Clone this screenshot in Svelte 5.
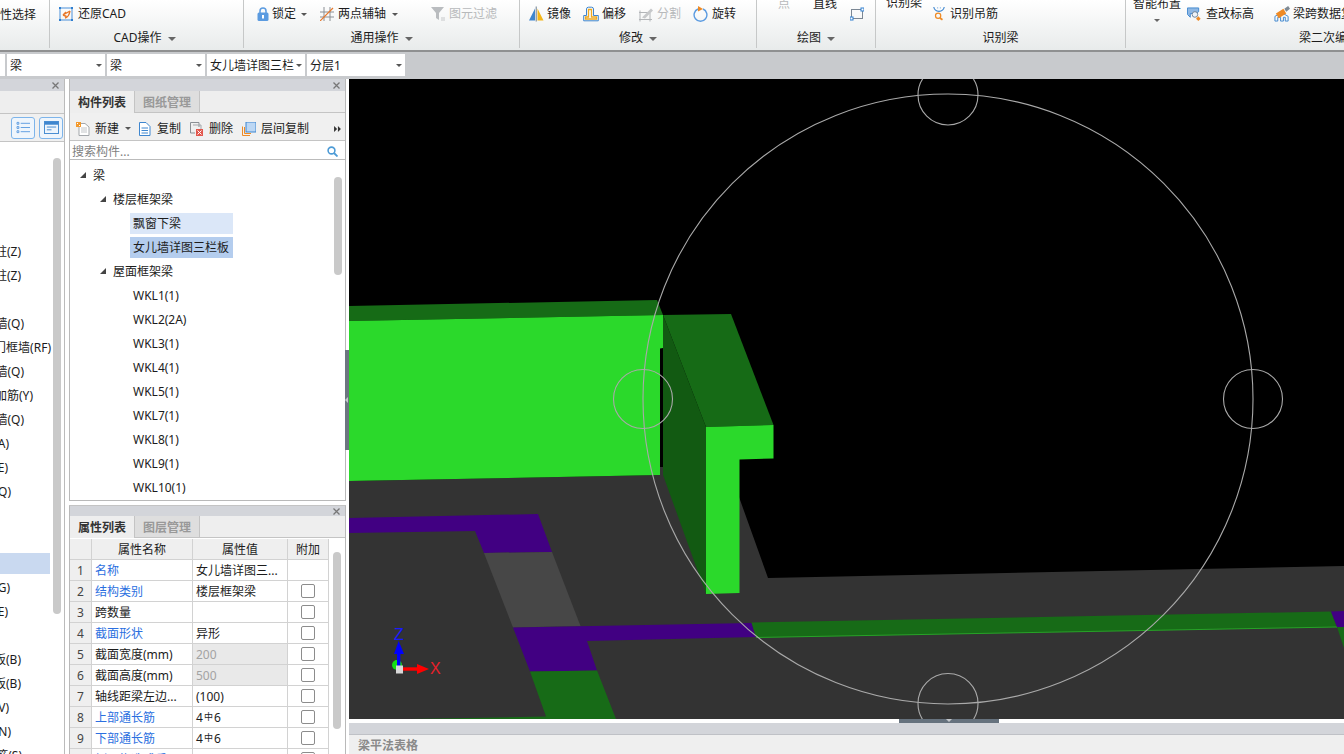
<script lang="ts">
  const leftRows = [
    { end: 0, text: '' }, { end: 0, text: '' }, { end: 0, text: '' }, { end: 0, text: '' },
    { end: 21, text: '框柱(Z)' }, { end: 21, text: '暗柱(Z)' }, { end: 0, text: '' },
    { end: 24, text: '砌体墙(Q)' }, { end: 51, text: '门框墙(RF)' }, { end: 24, text: '砌体墙(Q)' },
    { end: 33, text: '砌体加筋(Y)' }, { end: 24, text: '保温墙(Q)' }, { end: 9, text: '门联窗(A)' },
    { end: 8, text: '飘窗(E)' }, { end: 11, text: '墙洞(Q)' }, { end: 0, text: '' }, { end: 0, text: '' },
    { end: 50, text: '', selected: true },
    { end: 10, text: '连梁(G)' }, { end: 8, text: '圈梁(E)' }, { end: 0, text: '' },
    { end: 21, text: '现浇板(B)' }, { end: 21, text: '螺旋板(B)' }, { end: 9, text: '柱帽(V)' },
    { end: 11, text: '板洞(N)' }, { end: 22, text: '板受力筋(S)' },
  ]

  const tree = [
    { text: '梁', level: 0, open: true },
    { text: '楼层框架梁', level: 1, open: true },
    { text: '飘窗下梁', level: 2, mark: 'hover' },
    { text: '女儿墙详图三栏板', level: 2, mark: 'active' },
    { text: '屋面框架梁', level: 1, open: true },
    ...['WKL1(1)', 'WKL2(2A)', 'WKL3(1)', 'WKL4(1)', 'WKL5(1)', 'WKL7(1)', 'WKL8(1)', 'WKL9(1)', 'WKL10(1)'].map((text) => ({ text, level: 2 })),
  ]

  const props = [
    { name: '名称', value: '女儿墙详图三...', link: true, nobox: true },
    { name: '结构类别', value: '楼层框架梁', link: true },
    { name: '跨数量', value: '' },
    { name: '截面形状', value: '异形', link: true },
    { name: '截面宽度(mm)', value: '200', locked: true },
    { name: '截面高度(mm)', value: '500', locked: true },
    { name: '轴线距梁左边...', value: '(100)' },
    { name: '上部通长筋', value: '4', rebar: '6', link: true },
    { name: '下部通长筋', value: '4', rebar: '6', link: true },
    { name: '侧面构造或受...', value: '', link: true },
  ]
</script>

<div class="app">
  <header class="ribbon">
    <section class="group g1">
      <div class="items"><span class="tool cut">属性选择</span></div>
    </section>

    <section class="group g2">
      <div class="items">
        <span class="tool">
          <svg class="ico" viewBox="0 0 14 14"><rect x="1" y="1" width="12" height="12" fill="none" stroke="#4a90d9" /><rect x="0" y="0" width="2" height="2" fill="#2f7fd0" /><rect x="12" y="0" width="2" height="2" fill="#2f7fd0" /><rect x="0" y="12" width="2" height="2" fill="#2f7fd0" /><rect x="12" y="12" width="2" height="2" fill="#2f7fd0" /><path d="M4 8 L11 4 M4 8 L7 5 M4 8 L7.5 9.5 M6 11 Q10 10 11 4" fill="none" stroke="#e8782a" stroke-width="1.4" /></svg>
          还原CAD
        </span>
      </div>
      <div class="label">CAD操作<i class="caret big"></i></div>
    </section>

    <section class="group g3">
      <div class="items">
        <span class="tool lock-tool">
          <svg class="ico lock" viewBox="0 0 12 14"><path d="M3 6V4a3 3 0 0 1 6 0v2" fill="none" stroke="#5b9be0" stroke-width="1.5" /><rect x="0.5" y="5.5" width="11" height="8.5" rx="1.5" fill="#5b9be0" /><rect x="5" y="8" width="2" height="3.5" fill="#fff" /></svg>
          锁定<i class="caret"></i>
        </span>
        <span class="tool">
          <svg class="ico" viewBox="0 0 14 14"><path d="M0 5H14M0 10H14M4 0V14M10 0V14" stroke="#8a8f94" fill="none" /><path d="M0 14L13 1" stroke="#e8782a" stroke-width="1.2" /></svg>
          两点辅轴<i class="caret"></i>
        </span>
        <span class="tool off">
          <svg class="ico" viewBox="0 0 14 14"><path d="M0 0H13L8 6V13L5 11V6Z" fill="#b9bcbf" /><path d="M10 11h4M10 13h4" stroke="#c6c8ca" /></svg>
          图元过滤
        </span>
      </div>
      <div class="label">通用操作<i class="caret big"></i></div>
    </section>

    <section class="group g4">
      <div class="items">
        <span class="tool">
          <svg class="ico wide" viewBox="0 0 16 15"><path d="M7 2L1 14H7Z" fill="#3e86cf" /><path d="M9.5 2L15.5 14H9.5Z" fill="#f4b619" /><path d="M8.2 0V15" stroke="#6a7b8c" /></svg>
          镜像
        </span>
        <span class="tool">
          <svg class="ico wide" viewBox="0 0 16 15"><path d="M0.7 14.3V9H3.5V2.5Q3.5 0.7 5.5 0.7H8.5Q10.5 0.7 10.5 2.5V9H15.3V14.3Z" fill="none" stroke="#3e86cf" /><path d="M2.5 12.5V10.5H5.5V3H8.5V10.5H13.5V12.5Z" fill="none" stroke="#efa91f" stroke-width="1.3" /></svg>
          偏移
        </span>
        <span class="tool off">
          <svg class="ico wide" viewBox="0 0 16 15"><path d="M1 6H12M1 13H14M2 4V15M12 6V15" fill="none" stroke="#b2b5b8" /><path d="M4 11L13 2L15 4L7 12Z" fill="#c6c8ca" /></svg>
          分割
        </span>
        <span class="tool">
          <svg class="ico wide" viewBox="0 0 16 16"><path d="M10 3A6.4 6.4 0 1 1 5 3" fill="none" stroke="#5b9be0" stroke-width="1.4" /><path d="M5 0L10 3L5 5.5Z" fill="#ee8a25" /></svg>
          旋转
        </span>
      </div>
      <div class="label">修改<i class="caret big"></i></div>
    </section>

    <section class="group g5">
      <div class="items">
        <span class="tool up off">点</span>
        <span class="tool up">直线</span>
        <span class="tool">
          <svg class="ico" viewBox="0 0 14 12"><rect x="1.5" y="1.5" width="11" height="9" fill="none" stroke="#7b8794" /><rect x="0" y="9" width="3" height="3" fill="#fff" stroke="#2f7fd0" /><rect x="11" y="0" width="3" height="3" fill="#fff" stroke="#2f7fd0" /></svg>
        </span>
      </div>
      <div class="label">绘图<i class="caret big"></i></div>
    </section>

    <section class="group g6">
      <div class="items">
        <span class="tool up">识别梁</span>
        <span class="tool">
          <svg class="ico" viewBox="0 0 14 16"><path d="M1 0Q2 5 7 5T13 0" fill="none" stroke="#3e86cf" stroke-width="1.3" /><path d="M5 1h1M8 1h1" stroke="#3e86cf" /><circle cx="6" cy="10" r="3" fill="none" stroke="#ee8a25" stroke-width="1.4" /><path d="M8 12.5l3 2" stroke="#ee8a25" stroke-width="2" /></svg>
          识别吊筋
        </span>
      </div>
      <div class="label low">识别梁</div>
    </section>

    <section class="group g7">
      <div class="items">
        <span class="tool up stack">智能布置<i class="caret"></i></span>
        <span class="tool">
          <svg class="ico" viewBox="0 0 14 15"><path d="M0 1H12V5L9 7H3V11L0 8Z" fill="#8fb8e4" stroke="#3e86cf" /><circle cx="8" cy="8" r="3" fill="#eef3f8" stroke="#6f8193" /><rect x="10" y="11" width="3.5" height="3.5" fill="#ee8a25" transform="rotate(45 12 12.5)" /></svg>
          查改标高
        </span>
        <span class="tool far">
          <svg class="ico wide" viewBox="0 0 17 17"><path d="M1 16V11L8 7L15 11V16H12V12H10V16H7V12H4V16Z" fill="none" stroke="#3e86cf" /><path d="M2 8L10 3L13 8L5 13Z" fill="#ee8a25" /><path d="M11 3L15 0L17 3L13 6Z" fill="#7f8a94" /></svg>
          梁跨数据复制
        </span>
      </div>
      <div class="label">梁二次编辑</div>
    </section>
  </header>

  <div class="filterbar">
    <span class="stub"></span>
    <span class="combo">梁<i class="caret"></i></span>
    <span class="combo">梁<i class="caret"></i></span>
    <span class="combo">女儿墙详图三栏<i class="caret"></i></span>
    <span class="combo">分层1<i class="caret"></i></span>
  </div>

  <main class="workspace">
    <aside class="left-dock">
      <div class="dock-head">
        <svg class="close" viewBox="0 0 7 7"><path d="M0.5 0.5L6.5 6.5M6.5 0.5L0.5 6.5" /></svg>
      </div>
      <div class="left-tabs"></div>
      <div class="left-tools">
        <span class="view-btn">
          <svg viewBox="0 0 16 14"><path d="M5 2.5H15M5 7H15M5 11.5H15" stroke="#5b9be0" /><path d="M1 1.5h2v2H1zM1 6h2v2H1zM1 10.5h2v2H1z" fill="none" stroke="#5b9be0" /></svg>
        </span>
        <span class="view-btn">
          <svg viewBox="0 0 16 14"><rect x="0.5" y="0.5" width="15" height="13" fill="none" stroke="#3e86cf" /><rect x="1" y="1" width="14" height="3" fill="#3e86cf" /><path d="M3 6.5H13M3 9.5H8" stroke="#3e86cf" /></svg>
        </span>
      </div>
      <div class="left-tree">
        {#each leftRows as row}
          <div class="left-row">
            <span class:picked={row.selected} style="width: {row.end}px">{row.text}</span>
          </div>
        {/each}
        <div class="scroll left-scroll"></div>
      </div>
    </aside>

    <div class="mid-dock">
      <section class="panel upper">
        <div class="dock-head">
          <svg class="close" viewBox="0 0 7 7"><path d="M0.5 0.5L6.5 6.5M6.5 0.5L0.5 6.5" /></svg>
        </div>
        <div class="tabs">
          <span class="tab on">构件列表</span>
          <span class="tab">图纸管理</span>
        </div>
        <div class="actions">
          <span class="act new">
            <svg viewBox="0 0 14 14"><path d="M3 1.5H9L13 5V13.5H3Z" fill="#fff" stroke="#a3a7ab" /><path d="M5 6h6M5 8h6M5 10h6" stroke="#c2c5c8" /><rect x="0" y="0" width="5" height="5" fill="#f39a2e" /><path d="M1 1h1v1H1zM3 3h1v1H3z" fill="#fff" /></svg>
            新建<i class="caret"></i>
          </span>
          <span class="act">
            <svg viewBox="0 0 14 14"><path d="M1.5 0.5H8L12 4.5V13.5H1.5Z" fill="#fff" stroke="#3e86cf" /><path d="M3.5 6H10M3.5 8.5H10M3.5 11H10" stroke="#3e86cf" /></svg>
            复制
          </span>
          <span class="act">
            <svg viewBox="0 0 14 14"><path d="M0.5 0.5H9V5M0.5 0.5V11H5" fill="none" stroke="#8a8f94" /><path d="M3 3H11V7" fill="none" stroke="#a3a7ab" /><rect x="6" y="7" width="7" height="7" fill="#e2564c" /><path d="M7.5 8.5L11.5 12.5M11.5 8.5L7.5 12.5" stroke="#fff" /></svg>
            删除
          </span>
          <span class="act">
            <svg viewBox="0 0 14 14"><path d="M0.5 13.5V4.5M0.5 13.5H8M2.5 11.5V5M2.5 11.5H9" fill="none" stroke="#ee8a25" /><rect x="4" y="0" width="10" height="10" fill="#bcd7f4" stroke="#3e86cf" /></svg>
            层间复制
          </span>
          <svg class="more" viewBox="0 0 8 7"><path d="M0 0L3.5 3.5L0 7ZM4.5 0L8 3.5L4.5 7Z" fill="#333" /></svg>
        </div>
        <div class="search">
          <span>搜索构件...</span>
          <svg viewBox="0 0 11 11"><circle cx="4.5" cy="4.5" r="3.4" fill="none" stroke="#4d9bd6" stroke-width="1.6" /><path d="M7 7L10.5 10.5" stroke="#4d9bd6" stroke-width="1.8" /></svg>
        </div>
        <div class="tree">
          {#each tree as node}
            <div class="node lv{node.level}">
              {#if node.open}<i class="twist"></i>{/if}
              <span class={node.mark}>{node.text}</span>
            </div>
          {/each}
          <div class="scroll tree-scroll"></div>
        </div>
      </section>

      <section class="panel lower">
        <div class="dock-head">
          <svg class="close" viewBox="0 0 7 7"><path d="M0.5 0.5L6.5 6.5M6.5 0.5L0.5 6.5" /></svg>
        </div>
        <div class="tabs">
          <span class="tab on">属性列表</span>
          <span class="tab">图层管理</span>
        </div>
        <div class="sheet">
          <div class="grid">
            <div class="th"></div>
            <div class="th">属性名称</div>
            <div class="th">属性值</div>
            <div class="th">附加</div>
            {#each props as row, i}
              <div class="idx">{i + 1}</div>
              <div class="name" class:link={row.link}>{row.name}</div>
              <div class="val" class:locked={row.locked}>
                {row.value}{#if row.rebar}<span class="bar">中</span>{row.rebar}{/if}
              </div>
              <div class="add">{#if !row.nobox}<i class="check"></i>{/if}</div>
            {/each}
          </div>
          <div class="scroll sheet-scroll"></div>
        </div>
      </section>
    </div>

    <div class="vsplit"><span></span></div>

    <div class="view">
      <svg class="scene" viewBox="349 79 995 640">
        <rect x="349" y="79" width="995" height="640" fill="#000" />
        <polygon points="349,481 660,475 660,467 663,467 739,497 768,578 1344,566 1344,719 349,719" fill="#333" />

        <polygon points="349,518 538,514 552,552 484,553 475,531 349,533" fill="#410082" />
        <polygon points="484,553 552,552 580.5,626 513,627.5" fill="#474747" />
        <polygon points="513,627.5 751.5,623 756,637 587,641 597,670.5 530,671.5" fill="#410082" />
        <polygon points="530,671.5 597,670.5 616,719 410,719 546,716.5" fill="#176b17" />
        <polygon points="751.5,622.5 1331,611.5 1337,627 756,637.5" fill="#176b17" />
        <line x1="756" y1="637.5" x2="1337" y2="627" stroke="#27a327" />
        <polygon points="1331,611.5 1344,611 1344,627 1337,627" fill="#410082" />
        <polygon points="1337,627 1344,627 1344,648" fill="#176b17" />

        <polygon points="349,306 657,300 663,315 349,321" fill="#166b16" />
        <polygon points="349,321 663,315 663,348 660,348.5 660,475 349,481" fill="#2bd92b" />
        <polygon points="663,315 706,427 706,594 663,475" fill="#125a12" />
        <polygon points="663,315 731,314 773.5,425 706,427" fill="#166b16" />
        <polygon points="706,427 773.5,425 773.5,458.5 739.5,459.5 739.5,593 706,594" fill="#2bd92b" />

        <g fill="none" stroke="#a9a9a9" stroke-width="1.1">
          <circle cx="948" cy="399" r="305" />
          <circle cx="643" cy="399" r="29.5" />
          <circle cx="1253" cy="399" r="29.5" />
          <circle cx="948" cy="95" r="30" />
          <circle cx="948" cy="703.5" r="30" />
        </g>

        <circle cx="397" cy="665" r="5" fill="#14e014" />
        <path d="M398.7 668V652" stroke="#0000ff" stroke-width="3.4" />
        <polygon points="398.7,641 404,654 394,654" fill="#0000ff" />
        <path d="M402 669H419" stroke="#ff0000" stroke-width="3.4" />
        <polygon points="429,669 417,664 417,674" fill="#ff0000" />
        <rect x="396" y="665.5" width="7" height="8" fill="#d8d8d8" />
        <text class="axis" x="394" y="640" fill="#1a1aff">Z</text>
        <text class="axis" x="430" y="674" fill="#e8202a">X</text>
      </svg>
      <div class="hsplit"><span></span></div>
      <div class="dock-head wide"></div>
      <div class="table-title">梁平法表格</div>
    </div>
  </main>
</div>

<style>
  :global(body) {
    overflow: hidden;
  }

  .app {
    display: flex;
    flex-direction: column;
    width: 1344px;
    height: 754px;
    overflow: hidden;
    background: #fff;
    color: #1c1c1c;
    font-family: 'Noto Sans', 'Noto Sans CJK SC', sans-serif;
    font-size: 12px;
    line-height: 16px;
  }

  i {
    font-style: normal;
  }

  .caret {
    display: inline-block;
    width: 0;
    height: 0;
    border: 3px solid transparent;
    border-top: 3px solid #555;
    border-bottom: 0;
  }

  .caret.big {
    margin-left: 6px;
    border-width: 4px 4px 0;
    border-top-color: #666;
    vertical-align: middle;
  }

  /* ribbon */
  .ribbon {
    display: flex;
    flex: none;
    height: 52px;
    box-sizing: border-box;
    border-bottom: 2px solid #8f9091;
    background: linear-gradient(#fff, #e8ebeb);
    overflow: hidden;
  }

  .group {
    position: relative;
    display: flex;
    flex: none;
    flex-direction: column;
    box-sizing: border-box;
    height: 48px;
    border-right: 1px solid #c6c8c8;
  }

  .items {
    display: flex;
    align-items: center;
    height: 28px;
    padding-top: 1px;
  }

  .label {
    margin-top: 1px;
    text-align: center;
    line-height: 20px;
  }

  .label.low {
    margin-top: 2px;
  }

  .tool {
    display: flex;
    flex: none;
    align-items: center;
    gap: 4px;
    white-space: nowrap;
  }

  .tool .caret {
    margin-left: 2px;
  }

  .tool.off {
    color: #b7b9bb;
  }

  .tool.up {
    margin-top: -21px;
  }

  .tool.cut {
    margin-left: -12px;
  }

  .tool.stack {
    position: relative;
  }

  .tool.stack .caret {
    position: absolute;
    left: 21px;
    top: 23px;
    margin: 0;
    border-top-color: #666;
  }

  .ico {
    display: block;
    flex: none;
    width: 14px;
    height: 14px;
  }

  .ico.lock {
    width: 12px;
  }

  .ico.wide {
    width: 16px;
    height: 16px;
  }

  .g1 { width: 50px; }
  .g2 { width: 194px; }
  .g3 { width: 276px; }
  .g4 { width: 237px; }
  .g5 { width: 119px; }
  .g6 { width: 250px; }
  .g7 { flex: 1; border-right: 0; }

  .g2 .items { padding-left: 9px; }
  .g2 .tool { gap: 5px; }
  .g2 .label { margin-left: -4px; }

  .g3 .items { padding-left: 13px; gap: 13px; }
  .g3 .lock-tool { gap: 3px; }
  .g3 .off { margin-left: 20px; }

  .g4 .items { padding-left: 8px; gap: 12px; }
  .g4 .tool { gap: 3px; }

  .g5 .items { padding-left: 21px; }
  .g5 .items .tool:nth-child(2) { margin-left: 23px; }
  .g5 .items .tool:nth-child(3) { margin-left: 13px; }

  .g6 .items { padding-left: 10px; gap: 10px; }

  .g7 .items { padding-left: 7px; gap: 6px; }
  .g7 .tool { gap: 5px; }
  .g7 .far { margin-left: 14px; gap: 3px; }
  .g7 .label { margin-left: 173px; text-align: left; }

  /* filter bar */
  .filterbar {
    display: flex;
    flex: none;
    gap: 2px;
    height: 27px;
    box-sizing: border-box;
    padding-top: 2px;
    background: #c8cacd;
  }

  .stub {
    width: 5px;
    height: 22px;
    background: #fff;
  }

  .combo {
    display: flex;
    flex: none;
    align-items: center;
    justify-content: space-between;
    box-sizing: border-box;
    width: 98px;
    height: 22px;
    padding: 1px 3px 0;
    background: #fff;
    white-space: nowrap;
    overflow: hidden;
  }

  .combo .caret {
    flex: none;
  }

  /* docks */
  .workspace {
    display: flex;
    flex: 1;
    min-height: 0;
  }

  .dock-head {
    position: relative;
    flex: none;
    height: 12px;
    background: #d3d5da;
  }

  .dock-head.wide {
    height: 11px;
    border-bottom: 1px solid #bfc1c6;
  }

  .close {
    position: absolute;
    right: 5px;
    top: 3px;
    width: 7px;
    height: 7px;
    fill: none;
    stroke: #777;
    stroke-width: 1.3;
  }

  .left-dock {
    flex: none;
    display: flex;
    flex-direction: column;
    width: 65px;
    box-sizing: border-box;
    border-right: 1px solid #bbb;
    margin-right: 4px;
  }

  .left-tabs {
    flex: none;
    height: 22px;
    border-bottom: 1px solid #c4c4c4;
    background: #eee;
  }

  .left-tools {
    display: flex;
    flex: none;
    justify-content: flex-end;
    align-items: center;
    gap: 4px;
    height: 27px;
    padding-right: 1px;
    border-bottom: 1px solid #c4c4c4;
    background: #f0f0f0;
  }

  .view-btn {
    display: flex;
    align-items: center;
    justify-content: center;
    width: 22px;
    height: 20px;
    border: 1px solid #7db4ea;
    border-radius: 3px;
    background: #eef5fc;
  }

  .view-btn svg {
    width: 15px;
    height: 13px;
  }

  .left-tree {
    position: relative;
    flex: 1;
    padding-top: 1px;
    overflow: hidden;
    background: #fff;
  }

  .left-row {
    display: flex;
    align-items: center;
    height: 24px;
  }

  .left-row span {
    display: flex;
    flex: none;
    justify-content: flex-end;
    height: 21px;
    line-height: 21px;
    white-space: nowrap;
  }

  .left-row .picked {
    background: #c9d9f0;
  }

  .scroll {
    position: absolute;
    width: 8px;
    border-radius: 4px;
    background: #c9c9c9;
  }

  .left-scroll {
    left: 53px;
    top: 16px;
    height: 456px;
  }

  .mid-dock {
    display: flex;
    flex: none;
    flex-direction: column;
    width: 277px;
  }

  .panel {
    display: flex;
    flex-direction: column;
    box-sizing: border-box;
    border: solid #b9b9b9;
    border-width: 0 1px;
  }

  .upper {
    height: 422px;
    border-bottom-width: 1px;
  }

  .lower {
    flex: 1;
    min-height: 0;
    margin-top: 4px;
    overflow: hidden;
    border-top: 1px solid #c4c4c4;
  }

  .lower .dock-head {
    height: 10px;
  }

  .lower .close {
    top: 2px;
  }

  .tabs {
    display: flex;
    flex: none;
    height: 22px;
    box-sizing: border-box;
    border-bottom: 1px solid #c4c4c4;
    background: #eee;
  }

  .tab {
    width: 65px;
    height: 22px;
    box-sizing: border-box;
    padding-top: 1px;
    border: solid #c4c4c4;
    border-width: 0 1px 1px 0;
    background: #dedede;
    color: #999;
    font-weight: 700;
    line-height: 21px;
    text-align: center;
  }

  .tab.on {
    border-bottom: 0;
    background: #eee;
    color: #333;
  }

  .actions {
    display: flex;
    flex: none;
    align-items: center;
    height: 28px;
    box-sizing: border-box;
    padding: 4px 0 0 6px;
    border-bottom: 1px solid #c4c4c4;
    background: #f0f0f0;
  }

  .act {
    display: flex;
    flex: none;
    align-items: center;
    gap: 5px;
    margin-right: 9px;
    white-space: nowrap;
  }

  .act svg {
    width: 14px;
    height: 14px;
  }

  .act.new {
    margin-right: 7px;
  }

  .act.new .caret {
    margin-left: 1px;
  }

  .more {
    width: 7px;
    height: 6px;
    margin-left: 16px;
  }

  .search {
    display: flex;
    flex: none;
    align-items: center;
    justify-content: space-between;
    height: 19px;
    box-sizing: border-box;
    padding: 3px 7px 0 2px;
    border-bottom: 1px solid #bbb;
    color: #7f7f7f;
  }

  .search svg {
    width: 11px;
    height: 11px;
  }

  .tree {
    position: relative;
    flex: 1;
    padding-top: 3px;
    overflow: hidden;
  }

  .node {
    position: relative;
    display: flex;
    align-items: center;
    height: 24px;
  }

  .node span {
    height: 21px;
    padding: 0 3px;
    line-height: 21px;
  }

  .lv0 { padding-left: 20px; }
  .lv1 { padding-left: 40px; }
  .lv2 { padding-left: 60px; }

  .twist {
    position: absolute;
    top: 9px;
    width: 0;
    height: 0;
    margin-left: -10px;
    border-style: solid;
    border-width: 0 0 6px 6px;
    border-color: transparent transparent #444 transparent;
  }

  .node .hover,
  .node .active {
    width: 97px;
  }

  .node .hover { background: #dbe7f8; }
  .node .active { background: #b4cdee; }

  .tree-scroll {
    right: 3px;
    top: 17px;
    height: 98px;
  }

  .sheet {
    position: relative;
    flex: 1;
    min-height: 0;
    padding-top: 1px;
    overflow: hidden;
  }

  .grid {
    display: grid;
    grid-template-columns: 22px 101px 95px 41px;
    grid-auto-rows: 21px;
    width: 259px;
  }

  .grid > div {
    box-sizing: border-box;
    border: solid #d2d2d2;
    border-width: 0 1px 1px 0;
    line-height: 21px;
    white-space: nowrap;
    overflow: hidden;
  }

  .grid .th {
    background: #efefef;
    text-align: center;
  }

  .grid .idx {
    background: #efefef;
    color: #444;
    text-align: center;
  }

  .grid .name,
  .grid .val {
    padding-left: 3px;
  }

  .grid .link {
    color: #2b6fe0;
  }

  .grid .locked {
    background: #e9e9e9;
    color: #a3a3a3;
  }

  .grid .add {
    display: flex;
    align-items: center;
    justify-content: center;
  }

  .check {
    display: block;
    width: 14px;
    height: 14px;
    box-sizing: border-box;
    border: 1px solid #8c8c8c;
    border-radius: 2px;
    background: #fff;
  }

  .bar {
    position: relative;
    top: -2px;
    margin: 0 1px;
    font-size: 9px;
  }

  .sheet-scroll {
    left: 263px;
    top: 14px;
    height: 177px;
  }

  /* view */
  .vsplit {
    flex: none;
    width: 4px;
    margin-left: -1px;
    padding-top: 271px;
  }

  .vsplit span {
    display: flex;
    align-items: center;
    height: 100px;
    background: #6c7680;
  }

  .vsplit span::before {
    content: '';
    border: 3px solid transparent;
    border-left: 0;
    border-right: 3px solid #c3c7cb;
  }

  .view {
    display: flex;
    flex: 1;
    flex-direction: column;
    min-width: 0;
  }

  .scene {
    display: block;
    flex: none;
    width: 995px;
    height: 640px;
  }

  .axis {
    font-family: 'Liberation Sans', sans-serif;
    font-size: 16px;
  }

  .hsplit {
    flex: none;
    height: 4px;
    padding-left: 550px;
  }

  .hsplit span {
    display: flex;
    justify-content: center;
    width: 100px;
    height: 4px;
    background: #66727e;
  }

  .hsplit span::before {
    content: '';
    height: 0;
    border: 3px solid transparent;
    border-top: 3px solid #c3c7cb;
    border-bottom: 0;
  }

  .table-title {
    flex: 1;
    padding: 3px 0 0 9px;
    background: #efefef;
    color: #8a8a8a;
    font-weight: 700;
  }
</style>
